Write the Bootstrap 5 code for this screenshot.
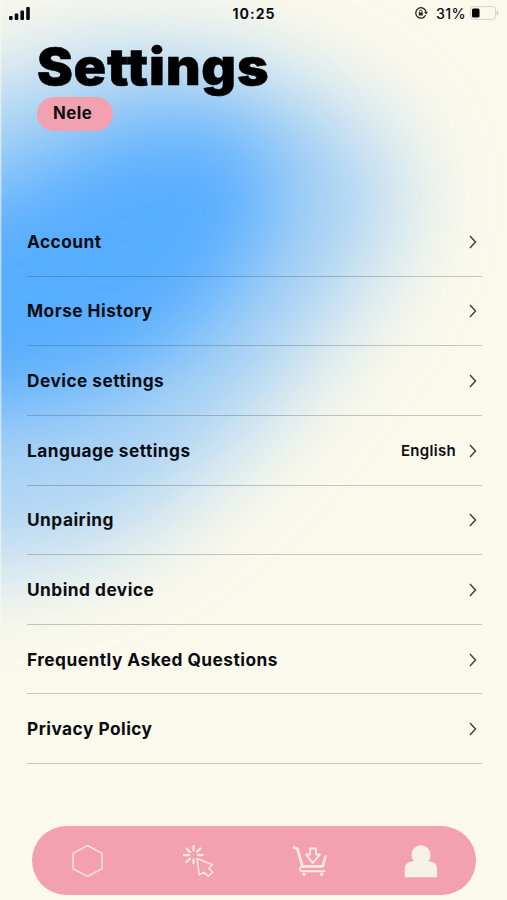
<!DOCTYPE html>
<html lang="en">
<head>
<meta charset="utf-8">
<meta name="viewport" content="width=device-width, initial-scale=1">
<title>Settings</title>
<link href="https://cdn.jsdelivr.net/npm/bootstrap@5.3.0/dist/css/bootstrap.min.css" rel="stylesheet">
<style>
body { background: #fbf9ec; font-family: Inter, "Liberation Sans", sans-serif; font-optical-sizing: none; color: #0b0d12; }
.phone { width: 507px; height: 900px; isolation: isolate; }
.glow { left: 0; top: 0; z-index: -1; }
.status { height: 27px; padding: 0 8px 0 9px; font-size: 14.2px; }
.status > div { flex: 1 1 0; }
.charge { font-weight: 500; letter-spacing: .35px; }
.clock { font-weight: 700; font-size: 14px; letter-spacing: 1px; }
.heading { padding: 0 37px; height: 180px; }
.title { font-size: 50.5px; line-height: 60px; font-weight: 900; margin: 10px 0 0; letter-spacing: .7px; color: #000; transform: scaleX(1.065); transform-origin: left; -webkit-text-stroke: .5px #000; }
.user { width: 76px; height: 34px; background: #f3a0b0; font-size: 16.8px; font-weight: 700; letter-spacing: .5px; padding: 0 0 1px 16px; }
.menu { margin: 0 25px 0 27px; }
.menu .list-group-item { height: 69.64px; padding: 1px 5px 0 0; background: none; border: 0; border-bottom: 1px solid rgba(50,65,75,.28); color: inherit; font-size: 17.3px; font-weight: 700; letter-spacing: .47px; }
.menu .value { font-size: 15px; font-weight: 600; letter-spacing: .3px; margin: 1px 13px 0 0; }
.tabs { width: 444px; height: 69px; background: #f3a0b0; margin: 62px 0 0 32px; }
</style>
</head>
<body>
<main class="phone position-relative overflow-hidden d-flex flex-column">
  <svg class="glow position-absolute" width="507" height="900" aria-hidden="true">
    <defs>
      <filter id="wide" filterUnits="userSpaceOnUse" x="-400" y="-300" width="1200" height="1300" color-interpolation-filters="sRGB"><feGaussianBlur stdDeviation="46"/></filter>
      <filter id="soft" filterUnits="userSpaceOnUse" x="-400" y="-300" width="1200" height="1300" color-interpolation-filters="sRGB"><feGaussianBlur stdDeviation="43"/></filter>
    </defs>
    <path filter="url(#wide)" fill="#52abff" fill-opacity=".46" d="M-150 110 C-30 90 20 60 100 48 C200 38 345 80 394 150 C420 200 385 275 330 335 C280 410 230 460 150 525 C80 565 -40 575 -150 580Z"/>
    <path filter="url(#soft)" fill="#52abff" fill-opacity=".95" d="M-150 250 C-40 200 20 175 85 140 C160 105 240 110 270 148 C298 190 262 255 230 300 C190 350 145 375 90 393 C20 412 -40 422 -150 422Z"/>
    <path d="M.7 0V630" stroke="#fbf8eb" stroke-opacity=".6" stroke-width="1.4"/>
  </svg>
  <header class="status d-flex align-items-center">
    <div><svg class="d-block" width="22" height="14" fill="#080b10"><rect y="9" width="3.6" height="4" rx="1"/><rect x="5.7" y="6.5" width="3.6" height="6.5" rx="1"/><rect x="11.4" y="3.5" width="3.6" height="9.5" rx="1"/><rect x="17.2" y="0" width="3.6" height="13" rx="1"/></svg></div>
    <span class="clock">10:25</span>
    <div class="d-flex justify-content-end align-items-center">
      <svg width="14" height="14" viewBox="0 0 14 14" fill="none" stroke="#222" stroke-width="1.3"><path d="M11.6 9.3A5.2 5.2 0 1 1 12 5.6"/><path d="M10 5.7h4L12 8.4Z" fill="#222" stroke="none"/><rect x="4.8" y="6.5" width="4" height="3" fill="#222" stroke="none"/><path d="M5.6 6.7V5.2a1.2 1.2 0 0 1 2.4 0v1.5" stroke-width=".9"/></svg>
      <span class="charge ms-1 ps-1">31%</span>
      <svg class="ms-1" width="29" height="14" fill="none"><rect x=".6" y=".6" width="25" height="12.8" rx="3" stroke="#d3d2ca"/><rect x="2" y="2.5" width="7.5" height="9" rx="1.5" fill="#000"/><path d="M27.5 5v4" stroke="#cfcec6" stroke-width="1.5"/></svg>
    </div>
  </header>
  <section class="heading">
    <h1 class="title">Settings</h1>
    <div class="user rounded-pill d-flex align-items-center">Nele</div>
  </section>
  <div class="menu list-group rounded-0">
    <a class="list-group-item rounded-0 d-flex align-items-center justify-content-between" href="#">Account<svg width="8" height="14" fill="none" stroke="#45443f" stroke-width="1.5"><path d="M1 1 6.5 7 1 13"/></svg></a>
    <a class="list-group-item rounded-0 d-flex align-items-center justify-content-between" href="#">Morse History<svg width="8" height="14" fill="none" stroke="#45443f" stroke-width="1.5"><path d="M1 1 6.5 7 1 13"/></svg></a>
    <a class="list-group-item rounded-0 d-flex align-items-center justify-content-between" href="#">Device settings<svg width="8" height="14" fill="none" stroke="#45443f" stroke-width="1.5"><path d="M1 1 6.5 7 1 13"/></svg></a>
    <a class="list-group-item rounded-0 d-flex align-items-center" href="#">Language settings<span class="value ms-auto">English</span><svg width="8" height="14" fill="none" stroke="#45443f" stroke-width="1.5"><path d="M1 1 6.5 7 1 13"/></svg></a>
    <a class="list-group-item rounded-0 d-flex align-items-center justify-content-between" href="#">Unpairing<svg width="8" height="14" fill="none" stroke="#45443f" stroke-width="1.5"><path d="M1 1 6.5 7 1 13"/></svg></a>
    <a class="list-group-item rounded-0 d-flex align-items-center justify-content-between" href="#">Unbind device<svg width="8" height="14" fill="none" stroke="#45443f" stroke-width="1.5"><path d="M1 1 6.5 7 1 13"/></svg></a>
    <a class="list-group-item rounded-0 d-flex align-items-center justify-content-between" href="#">Frequently Asked Questions<svg width="8" height="14" fill="none" stroke="#45443f" stroke-width="1.5"><path d="M1 1 6.5 7 1 13"/></svg></a>
    <a class="list-group-item rounded-0 d-flex align-items-center justify-content-between" href="#">Privacy Policy<svg width="8" height="14" fill="none" stroke="#45443f" stroke-width="1.5"><path d="M1 1 6.5 7 1 13"/></svg></a>
  </div>
  <nav class="tabs rounded-pill d-flex align-items-center justify-content-around flex-shrink-0">
    <svg width="36" height="36" fill="none" stroke="#fbe0de" stroke-width="1.5"><path d="M17.5 2.5 32 10.3V25.7L17.5 33.5 3 25.7V10.3Z"/></svg>
    <svg width="36" height="36" fill="none" stroke="#fbe9e4"><path stroke-width="2.2" stroke-linecap="round" d="M12.5 3v4.5M12.5 16.5v4M3 12.2h5M17 12.2h4.5M5.5 5.5 9 9M19.3 5.5 16 8.8M5.5 19l3.5-3.3"/><path stroke-width="1.5" stroke-linejoin="round" d="M16 15.5 31.5 21.7 27.7 25.2 31.7 29.3 27.2 33.3 23.2 29.2 18.2 31.8Z"/></svg>
    <svg width="36" height="36" fill="none" stroke="#fbe9e4" stroke-linejoin="round" stroke-linecap="round"><path stroke-width="2.7" d="M2 4.4 5.5 6 10.5 23.3H30.7L33.5 13.5"/><path stroke-width="1.9" d="M10.5 23.5C7 24 7 28.3 10.5 28.3H32.5M18 5.5h6v6h4L20.7 20 14 11.5h4Z"/><circle cx="12" cy="31.3" r="1.3" fill="#fbe9e4"/><circle cx="29.5" cy="31.3" r="1.3" fill="#fbe9e4"/></svg>
    <svg width="36" height="36" fill="#f6f2e8"><path d="M8.5 11.4a9.5 9.2 0 1 1 19 0c0 3-.8 5-2.3 6.9 5.5.2 8.9 2.9 8.9 7.5v8.5H1.7v-8.5c0-4.6 3.6-7.3 9-7.5-1.2-1.8-2.2-3.9-2.2-6.9Z"/></svg>
  </nav>
</main>
<script src="https://cdn.jsdelivr.net/npm/bootstrap@5.3.0/dist/js/bootstrap.bundle.min.js"></script>
</body>
</html>
